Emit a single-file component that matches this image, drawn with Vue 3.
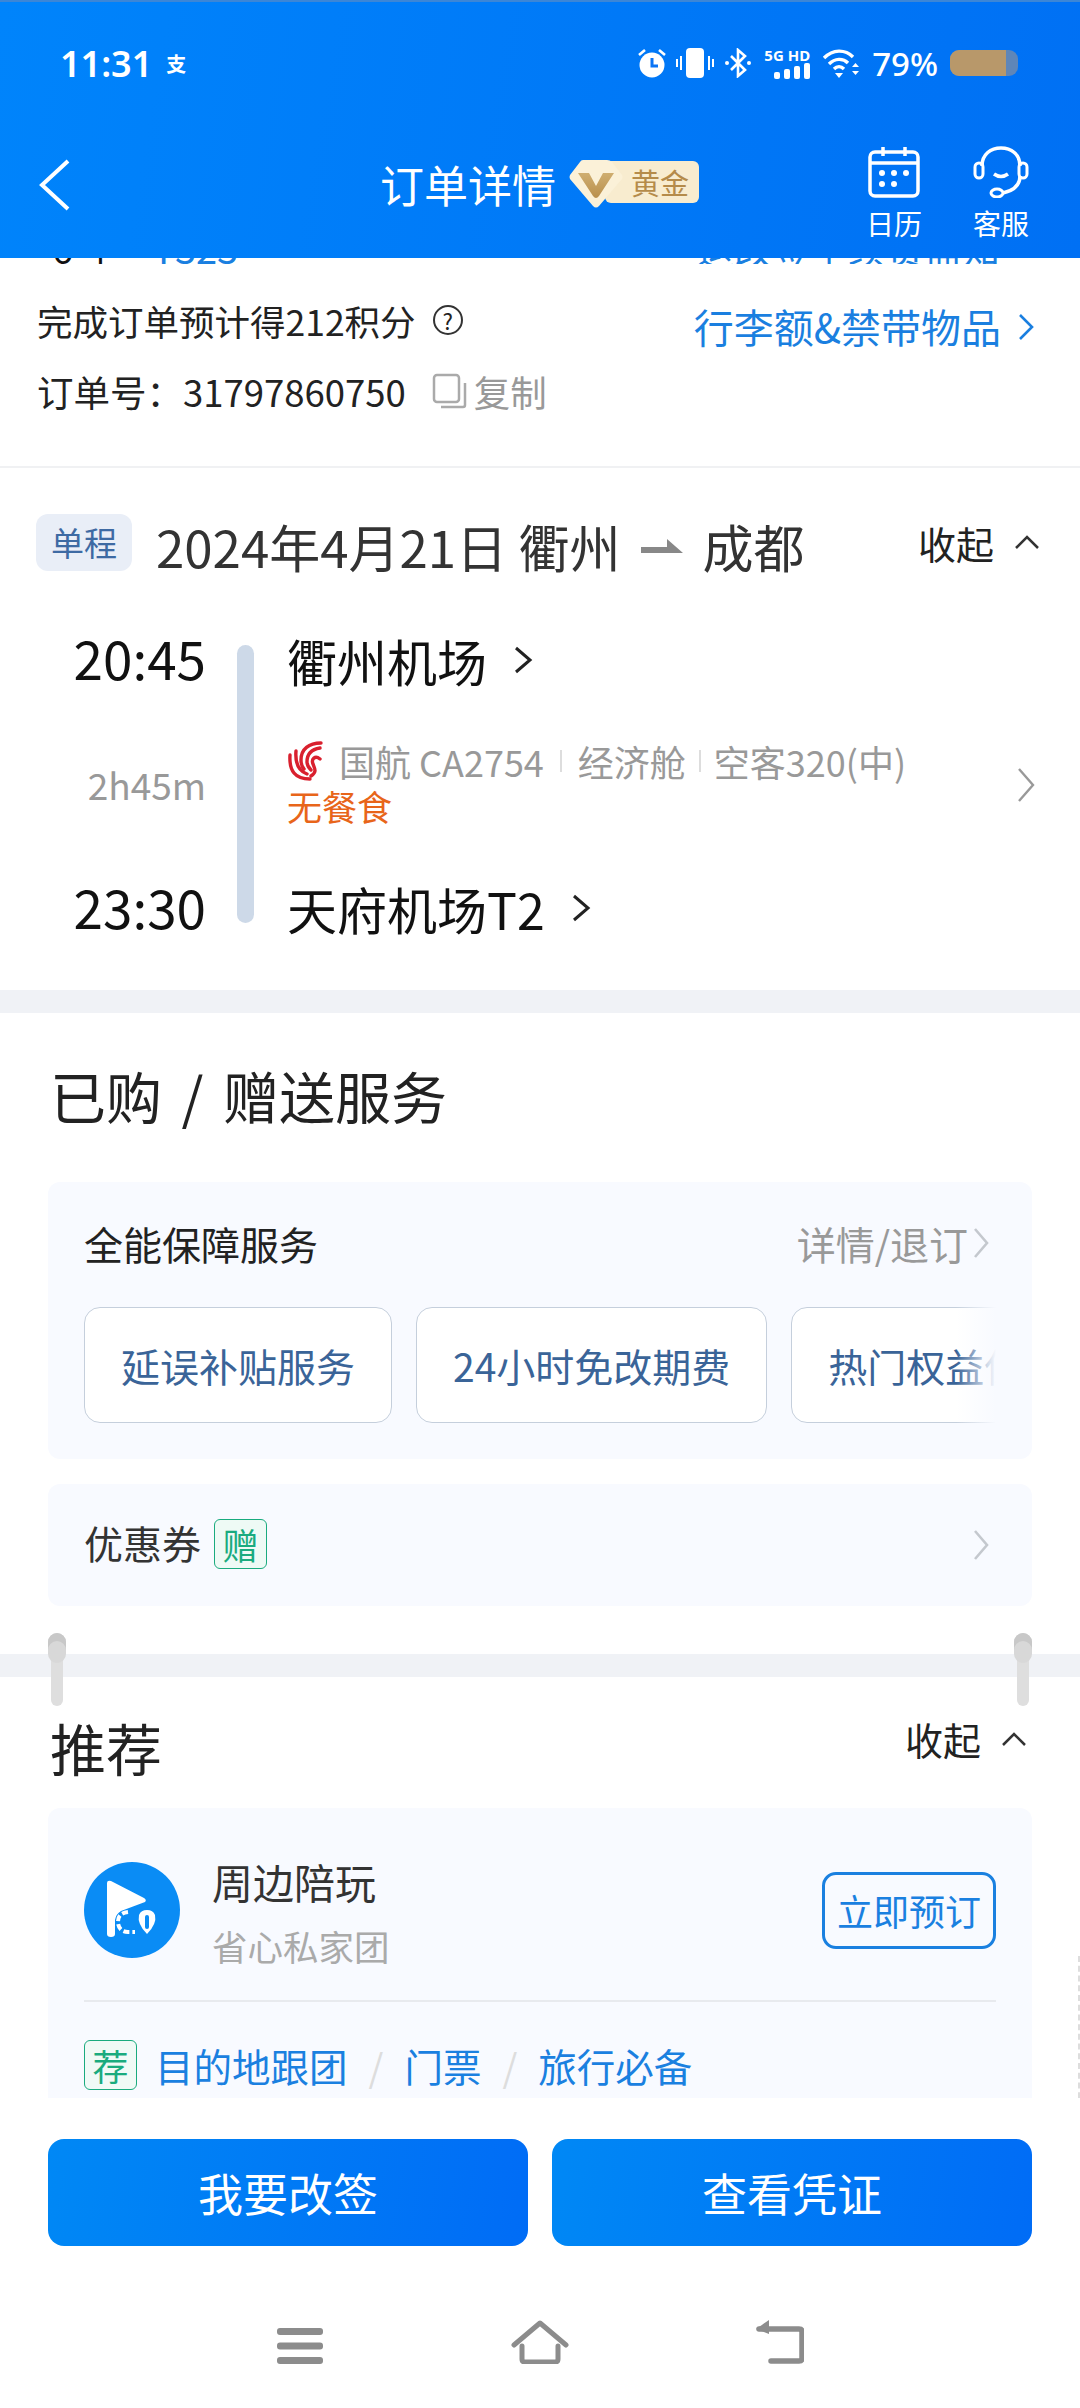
<script setup>
const chips = ['延误补贴服务', '24小时免改期费', '热门权益保障服务'];
</script>

<template>
  <div class="page">
    <header class="head">
      <div class="status">
        <span class="time">11:31</span>
        <span class="pay">支</span>
        <span class="grow"></span>
        <svg class="ic alarm" width="30" height="30" viewBox="0 0 30 30">
          <circle cx="15" cy="17" r="12.5" fill="#fff"/>
          <path d="M15 10v8h6" fill="none" stroke="#0a74f5" stroke-width="3"/>
          <path d="M2 7l6-5M28 7l-6-5" stroke="#fff" stroke-width="2.6"/>
        </svg>
        <svg class="ic vib" width="38" height="30" viewBox="0 0 38 30">
          <rect x="10" y="0" width="18" height="30" rx="4" fill="#fff"/>
          <path d="M5 8v14M1 11v8M33 8v14M37 11v8" stroke="#fff" stroke-width="2"/>
        </svg>
        <svg class="ic bt" width="28" height="30" viewBox="0 0 28 30">
          <path d="M7 8l14 14-7 6V2l7 6L7 22" fill="none" stroke="#fff" stroke-width="2.6"/>
          <circle cx="3" cy="15" r="2" fill="#fff"/><circle cx="25" cy="15" r="2" fill="#fff"/>
        </svg>
        <div class="sig">
          <span class="sigtext">5G HD</span>
          <svg width="36" height="16" viewBox="0 0 36 16">
            <rect x="0" y="9" width="6" height="7" rx="2" fill="#fff"/>
            <rect x="10" y="6" width="6" height="10" rx="2" fill="#fff"/>
            <rect x="20" y="3" width="6" height="13" rx="2" fill="#fff"/>
            <rect x="30" y="0" width="6" height="16" rx="2" fill="#fff"/>
          </svg>
        </div>
        <svg class="ic wifi" width="38" height="30" viewBox="0 0 38 30">
          <path d="M2 10C11 1 23 1 31 9M7 16c6-6 14-6 19-1M12 21c3-3 7-3 10 0" fill="none" stroke="#fff" stroke-width="3.4"/>
          <path d="M13 25h8l-4 5zM30 19l3.500-4 3.500 4zM30 23h7l-3.500 4z" fill="#fff"/>
        </svg>
        <span class="pct">79%</span>
        <div class="batt"><div class="fill"></div></div>
      </div>
      <div class="nav">
        <svg class="back" width="34" height="54" viewBox="0 0 34 54">
          <path d="M30 3L4 27l26 24" fill="none" stroke="#fff" stroke-width="4"/>
        </svg>
        <div class="titlewrap">
          <span class="title">订单详情</span>
          <span class="vip">
            <span class="viptext">黄金</span>
            <svg class="gem" width="54" height="50" viewBox="0 0 54 50">
              <defs>
                <linearGradient id="gemv" x1="0" y1="0" x2="0" y2="1">
                  <stop offset="0" stop-color="#cfae70"/>
                  <stop offset="1" stop-color="#b98f4c"/>
                </linearGradient>
              </defs>
              <path d="M14 1h24q3 0 5 2l10 13q1 2 0 4L30 47q-3 3-6 0L1 20q-1-2 0-4L11 3q1-2 3-2z" fill="#fbf1d8"/>
              <path d="M9 14h11l7 13 7-13h11L30 37q-3 4-6 0z" fill="url(#gemv)"/>
            </svg>
          </span>
        </div>
        <div class="tools">
          <div class="tool cal">
            <svg width="52" height="52" viewBox="0 0 52 52">
              <rect x="2" y="6" width="48" height="44" rx="5" fill="none" stroke="#fff" stroke-width="3.500"/>
              <path d="M2 17h48M15 1v9M37 1v9" stroke="#fff" stroke-width="3.500"/>
              <circle cx="14" cy="27" r="3" fill="#fff"/><circle cx="26" cy="27" r="3" fill="#fff"/><circle cx="38" cy="27" r="3" fill="#fff"/>
              <circle cx="14" cy="38" r="3" fill="#fff"/><circle cx="26" cy="38" r="3" fill="#fff"/>
            </svg>
            <span>日历</span>
          </div>
          <div class="tool srv">
            <svg width="56" height="52" viewBox="0 0 56 52">
              <path d="M9 20C9 8 18 2 28 2s19 6 19 18M47 30c0 10-8 15-17 17" fill="none" stroke="#fff" stroke-width="3.500"/>
              <rect x="2" y="17" width="8" height="15" rx="4" fill="none" stroke="#fff" stroke-width="3"/>
              <rect x="46" y="17" width="8" height="15" rx="4" fill="none" stroke="#fff" stroke-width="3"/>
              <path d="M21 28q7 5 14 0" fill="none" stroke="#fff" stroke-width="3.500"/>
              <ellipse cx="24" cy="47" rx="6" ry="4" fill="none" stroke="#fff" stroke-width="3"/>
            </svg>
            <span>客服</span>
          </div>
        </div>
      </div>
    </header>

    <main class="body">
      <div class="clip">
        <span class="cliptext">6 个 <b class="blue">T323</b></span>
        <span class="cliptextr">退改签手续费需知</span>
      </div>
      <div class="info">
        <div class="row1">
          <span>完成订单预计得212积分</span>
          <span class="q">?</span>
          <span class="grow"></span>
          <span class="link">行李额&amp;禁带物品</span>
          <svg class="chev" width="18" height="28" viewBox="0 0 18 28"><path d="M3 2l12 12L3 26" fill="none" stroke="#1a7fe0" stroke-width="2.600"/></svg>
        </div>
        <div class="row2">
          <span>订单号：31797860750</span>
          <svg class="copy" width="36" height="36" viewBox="0 0 36 36">
            <rect x="2" y="2" width="25" height="27" rx="3" fill="none" stroke="#aaa" stroke-width="2.500"/>
            <path d="M33 10v22q0 2-2 2H9" fill="none" stroke="#aaa" stroke-width="2.500"/>
          </svg>
          <span class="gray">复制</span>
        </div>
      </div>

      <section class="flight">
        <div class="fhead">
          <span class="oneway">单程</span>
          <span class="ftitle">2024年4月21日 衢州</span>
          <svg class="arrow" width="42" height="14" viewBox="0 0 42 14"><path d="M0 8h26V0l16 14H0z" fill="#888"/></svg>
          <span class="ftitle">成都</span>
          <span class="grow"></span>
          <span class="fold">收起</span>
          <svg class="caret" width="26" height="16" viewBox="0 0 26 16"><path d="M2 14L13 3l11 11" fill="none" stroke="#333" stroke-width="2.500"/></svg>
        </div>
        <div class="fbody">
          <div class="times">
            <span class="t">20:45</span>
            <span class="dur">2h45m</span>
            <span class="t">23:30</span>
          </div>
          <div class="bar"></div>
          <div class="detail">
            <div class="port">衢州机场
              <svg class="pchev" width="22" height="30" viewBox="0 0 22 30"><path d="M3 3l14 12L3 27" fill="none" stroke="#222" stroke-width="3"/></svg>
            </div>
            <div class="mid">
              <div class="midtext">
                <div class="line">
                  <svg class="logo" width="36" height="40" viewBox="0 0 36 40">
                    <g fill="none" stroke="#d9202e" stroke-width="3.400" stroke-linecap="round">
                      <path d="M3 14C2 30 8 38 23 38"/>
                      <path d="M9 10C8 22 12 30 20 33"/>
                      <path d="M34 2C22 2 14 8 14 19c0 4 1 7 3 9"/>
                      <path d="M33 7c-7 1-13 5-13 14 0 4 2 6 4 8"/>
                      <path d="M33 18c-5-4-9 0-7 5 2 5 4 8-2 12"/>
                    </g>
                  </svg>
                  <span class="ml">国航 CA2754</span>
                  <i class="sep"></i>
                  <span>经济舱</span>
                  <i class="sep s2"></i>
                  <span>空客320(中)</span>
                </div>
                <div class="meal">无餐食</div>
              </div>
              <svg class="midchev" width="20" height="36" viewBox="0 0 20 36"><path d="M3 2l14 16L3 34" fill="none" stroke="#999" stroke-width="2.400"/></svg>
            </div>
            <div class="port">天府机场T2
              <svg class="pchev" width="22" height="30" viewBox="0 0 22 30"><path d="M3 3l14 12L3 27" fill="none" stroke="#222" stroke-width="3"/></svg>
            </div>
          </div>
        </div>
      </section>

      <div class="band"></div>

      <section class="services">
        <h2 class="h1">已购 / 赠送服务</h2>
        <div class="card c1">
          <div class="chead">
            <span>全能保障服务</span>
            <span class="more">详情/退订
              <svg width="18" height="32" viewBox="0 0 18 32"><path d="M3 2l12 14L3 30" fill="none" stroke="#c4c8ce" stroke-width="2.600"/></svg>
            </span>
          </div>
          <div class="chips">
            <div v-for="c in chips" :key="c" class="chip">{{ c }}</div>
            <div class="fade"></div>
          </div>
        </div>
        <div class="card c2">
          <span>优惠券</span>
          <span class="tag gift">赠</span>
          <span class="grow"></span>
          <svg class="c2chev" width="18" height="32" viewBox="0 0 18 32"><path d="M3 2l12 14L3 30" fill="none" stroke="#c4c8ce" stroke-width="2.600"/></svg>
        </div>
      </section>

      <div class="band b2">
        <i class="handle l"></i>
        <i class="handle r"></i>
      </div>

      <section class="rec">
        <div class="rechead">
          <h2 class="h2">推荐</h2>
          <span class="grow"></span>
          <span class="fold">收起</span>
          <svg class="caret" width="26" height="16" viewBox="0 0 26 16"><path d="M2 14L13 3l11 11" fill="none" stroke="#333" stroke-width="2.500"/></svg>
        </div>
        <div class="card c3">
          <div class="prod">
            <div class="circle">
              <svg width="62" height="62" viewBox="0 0 62 62">
                <path d="M6 4q0-3 4-2l33 17q3 2 1 4L20 32q-5 3-6 9v14q0 3-4 3t-4-3z" fill="#fff"/>
                <path d="M27 33c-8 1-10 5-10 10s3 10 10 10h7" fill="none" stroke="#fff" stroke-width="4" stroke-dasharray="6 3"/>
                <path d="M38 36q2-5 8-5t8 5q2 9-8 19-10-10-8-19z" fill="#fff"/>
                <rect x="44" y="36" width="4" height="14" rx="2" fill="#0a8cf5"/>
              </svg>
            </div>
            <div class="ptext">
              <div class="pname">周边陪玩</div>
              <div class="psub">省心私家团</div>
            </div>
            <span class="grow"></span>
            <div class="book">立即预订</div>
          </div>
          <div class="recline">
            <span class="tag recm">荐</span>
            <span class="rl first">目的地跟团</span>
            <span class="slash">/</span>
            <span class="rl">门票</span>
            <span class="slash">/</span>
            <span class="rl">旅行必备</span>
          </div>
        </div>
      </section>
      <i class="edge"></i>
    </main>

    <footer class="foot">
      <div class="btns">
        <div class="btn">我要改签</div>
        <div class="btn">查看凭证</div>
      </div>
      <div class="sys">
        <svg width="46" height="36" viewBox="0 0 46 36">
          <rect y="0" width="46" height="7" rx="3" fill="#8c8c8c"/>
          <rect y="14.500" width="46" height="7" rx="3" fill="#8c8c8c"/>
          <rect y="29" width="46" height="7" rx="3" fill="#8c8c8c"/>
        </svg>
        <svg class="home" width="58" height="44" viewBox="0 0 58 44">
          <path d="M3 25L29 3l26 22M11 26v13q0 3 3 3h30q3 0 3-3V26" fill="none" stroke="#8c8c8c" stroke-width="5" stroke-linejoin="round" stroke-linecap="round"/>
        </svg>
        <svg class="bk" width="48" height="44" viewBox="0 0 48 44">
          <path d="M3 9h40q3 0 3 3v26q0 3-3 3H15" fill="none" stroke="#8c8c8c" stroke-width="5.500" stroke-linecap="round"/>
          <path d="M0 9L13 0v14z" fill="#8c8c8c"/>
        </svg>
      </div>
    </footer>
  </div>
</template>

<style>
html, body { margin: 0; background: #fff; }
</style>

<style scoped>
.page {
  width: 1080px; height: 2408px; display: flex; flex-direction: column; overflow: hidden;
  font-family: "Noto Sans CJK SC", "Noto Sans", sans-serif; color: #222; background: #fff;
}
.grow { flex: 1; }
i { display: block; font-style: normal; }
.head {
  height: 258px; flex: none; position: relative; z-index: 2; color: #fff; box-sizing: border-box;
  border-top: 2px solid #3c86d6;
  background: linear-gradient(100deg, #0084fb, #0070f4);
}
.status { height: 62px; padding: 30px 62px 0 60px; display: flex; align-items: center; }
.time { font: 600 36px "Noto Sans", sans-serif; }
.pay { font-size: 20px; font-weight: 700; margin-left: 14px; width: 30px; }
.ic { flex: none; }
.vib { margin-left: 9px; }
.bt { margin-left: 10px; }
.sig { margin-left: 10px; width: 48px; display: flex; flex-direction: column; align-items: flex-end; }
.sigtext { font: 700 15px/16px "Noto Sans", sans-serif; white-space: nowrap; }
.wifi { margin-left: 12px; }
.pct { font: 500 33px "Noto Sans", sans-serif; margin-left: 12px; }
.batt { width: 68px; height: 26px; border-radius: 9px; background: #5f86b8; margin-left: 12px; overflow: hidden; }
.fill { width: 56px; height: 26px; background: #b8986a; }

.nav { margin-top: 52px; height: 112px; padding: 0 50px 0 38px; display: flex; align-items: flex-start; }
.back { flex: none; margin-top: 12px; }
.titlewrap { margin: 3px 0 0 308px; display: flex; align-items: center; height: 70px; }
.title { font-size: 44px; font-weight: 400; line-height: 60px; }
.vip { display: block; position: relative; margin-left: 13px; width: 130px; height: 50px; }
.gem { position: absolute; left: 0; top: 0; }
.viptext {
  display: block; margin: 2px 0 0 36px; width: 94px; height: 42px; box-sizing: border-box; padding-left: 26px;
  background: #f8eccf; border-radius: 6px; color: #b58b4a; font-size: 29px; line-height: 42px;
}
.tools { margin-left: auto; display: flex; gap: 50px; }
.tool { display: flex; flex-direction: column; align-items: center; font-size: 28px; line-height: 40px; }
.tool svg { margin-bottom: 5px; }
.cal { width: 56px; }
.srv { width: 58px; }

.body { flex: 1; min-height: 0; overflow: hidden; position: relative; margin-top: -14px; }
.clip { height: 20px; overflow: hidden; display: flex; justify-content: space-between; padding: 0 80px 0 52px; font-size: 38px; line-height: 8px; color: #111; }
.blue { color: #1a7fe0; font-weight: 400; margin-left: 24px; }
.cliptextr { color: #1a7fe0; }
.info { padding: 25px 37px 0; height: 204px; box-sizing: border-box; border-bottom: 2px solid #f0f1f3; font-size: 35.5px; }
.row1 { display: flex; align-items: center; height: 62px; padding-right: 8px; }
.q {
  width: 30px; height: 30px; border: 2px solid #333; border-radius: 50%; box-sizing: border-box; font-size: 22px;
  line-height: 26px; text-align: center; margin-left: 17px;
}
.link { color: #1a7fe0; font-size: 40px; line-height: 56px; padding-top: 12px; }
.chev { margin-left: 16px; margin-top: 14px; }
.row2 { display: flex; align-items: center; height: 60px; margin-top: 10px; font-size: 36.5px; }
.copy { margin-left: 26px; margin-right: 6px; }
.gray { color: #999; }

.flight { height: 522px; box-sizing: border-box; padding-top: 46px; }
.fhead { display: flex; align-items: center; height: 64px; padding: 0 40px 0 36px; }
.oneway { width: 96px; height: 57px; border-radius: 12px; background: #e9eef7; color: #3e6aa3; font-size: 33px; line-height: 57px; text-align: center; margin-bottom: 8px; }
.ftitle { font-size: 51px; color: #333; margin-left: 24px; white-space: nowrap; }
.arrow { margin-left: 20px; margin-right: -4px; }
.fold { font-size: 38px; color: #222; margin-bottom: 8px; }
.caret { margin-left: 20px; margin-bottom: 8px; }
.fbody { display: flex; height: 340px; margin-top: 36px; }
.times { width: 206px; padding: 3px 0 8px; box-sizing: border-box; display: flex; flex-direction: column; justify-content: space-between; align-items: flex-end; }
.t { font-size: 53px; line-height: 80px; color: #111; }
.dur { font-size: 37px; color: #999; margin-top: 4px; }
.bar { width: 17px; height: 278px; margin: 31px 33px 0 31px; border-radius: 9px; background: #cdd9e8; }
.detail { flex: 1; padding: 6px 44px 6px 0; box-sizing: border-box; display: flex; flex-direction: column; justify-content: space-between; }
.port { font-size: 50px; line-height: 80px; color: #111; display: flex; align-items: center; }
.pchev { margin-left: 26px; }
.mid { display: flex; align-items: center; justify-content: space-between; margin-bottom: 6px; }
.midchev { margin-top: 8px; }
.line { display: flex; align-items: center; font-size: 36px; line-height: 50px; color: #999; white-space: nowrap; }
.logo { margin-right: 16px; }
.sep { width: 2px; height: 22px; background: #ddd; margin: 0 16px; }
.s2 { margin: 0 13px; }
.meal { color: #e8651a; font-size: 35px; line-height: 40px; }

.band { height: 23px; background: #f0f2f6; position: relative; }
.services { height: 641px; box-sizing: border-box; padding: 0 48px; }
.h1 { margin: 0; padding: 44px 0 0 2px; height: 169px; box-sizing: border-box; font-size: 56px; font-weight: 400; line-height: 76px; color: #222; word-spacing: 7px; }
.card { background: #f8faff; border-radius: 12px; }
.c1 { height: 277px; padding: 33px 36px 0; box-sizing: border-box; }
.chead { display: flex; justify-content: space-between; align-items: center; height: 56px; font-size: 39px; color: #222; }
.more { color: #999; display: flex; align-items: center; gap: 4px; padding-right: 6px; }
.chips { margin-top: 36px; display: flex; gap: 24px; overflow: hidden; position: relative; }
.chip {
  flex: none; height: 116px; padding: 0 36px; box-sizing: border-box; border: 1px solid #c5cfdc; border-radius: 16px; background: #fff;
  color: #3a6498; font-size: 39px; line-height: 114px; white-space: nowrap;
}
.fade { position: absolute; right: 0; top: 0; bottom: 0; width: 40px; background: linear-gradient(90deg, rgba(248,250,255,0), #f8faff); }
.c2 { height: 122px; margin-top: 25px; padding: 0 36px 6px; box-sizing: border-box; display: flex; align-items: center; font-size: 39px; color: #333; }
.c2chev { margin-right: 6px; margin-top: 6px; }
.tag { border-radius: 6px; box-sizing: border-box; text-align: center; }
.gift { width: 53px; height: 50px; margin: 4px 0 0 13px; border: 1px solid #1aab7e; color: #1aab7e; background: #eefaf5; font-size: 36px; line-height: 48px; }
.b2 { overflow: visible; z-index: 1; }
.handle { position: absolute; top: -4px; width: 12px; height: 56px; border-radius: 0 0 6px 6px; background: #dedede; }
.handle::before { content: ""; position: absolute; left: -3px; top: -17px; width: 18px; height: 30px; border-radius: 9px; background: #d8d8d8; box-shadow: inset 0 8px 0 #c8c8c8; }
.handle.l { left: 51px; }
.handle.r { left: 1017px; }

.rec { padding: 0 48px; }
.rechead { display: flex; align-items: center; height: 131px; padding: 0 5px 0 2px; }
.h2 { margin: 8px 0 0; font-size: 56px; font-weight: 400; color: #222; }
.c3 { height: 320px; box-sizing: border-box; padding: 54px 36px 0; overflow: hidden; }
.prod { display: flex; align-items: flex-start; height: 138px; border-bottom: 2px solid #e8eaee; }
.circle { width: 96px; height: 96px; border-radius: 50%; background: #0a8cf5; display: flex; align-items: center; justify-content: center; }
.ptext { margin: -9px 0 0 32px; }
.pname { font-size: 41px; line-height: 56px; color: #333; }
.psub { font-size: 35.5px; line-height: 50px; color: #aaa; margin-top: 12px; }
.book {
  width: 174px; height: 77px; box-sizing: border-box; border: 3px solid #1a80e0; border-radius: 14px; color: #1a80e0; font-size: 36px;
  line-height: 71px; text-align: center; margin-top: 10px;
}
.recline { display: flex; align-items: center; margin-top: 35px; font-size: 38.5px; }
.recm { width: 53px; height: 50px; border: 1px solid #1aab7e; color: #1aab7e; background: #f0faf6; font-size: 36px; line-height: 48px; }
.rl { color: #1a80e0; white-space: nowrap; }
.first { margin-left: 18px; }
.slash { color: #ddd; margin: 0 21px; font-size: 38px; }
.edge { position: absolute; right: 0; top: 1712px; height: 152px; border-right: 2px dashed #ddd; }

.foot { height: 310px; flex: none; background: #fff; position: relative; z-index: 2; padding-top: 41px; box-sizing: border-box; }
.btns { display: flex; gap: 24px; padding: 0 48px; }
.btn {
  flex: 1; height: 107px; border-radius: 16px; background: linear-gradient(100deg, #0088f5, #006cf6); color: #fff; font-size: 45px;
  line-height: 107px; text-align: center;
}
.sys { display: flex; align-items: flex-end; height: 50px; margin-top: 68px; padding-left: 277px; }
.home { margin-left: 188px; }
.bk { margin-left: 187px; }
</style>
